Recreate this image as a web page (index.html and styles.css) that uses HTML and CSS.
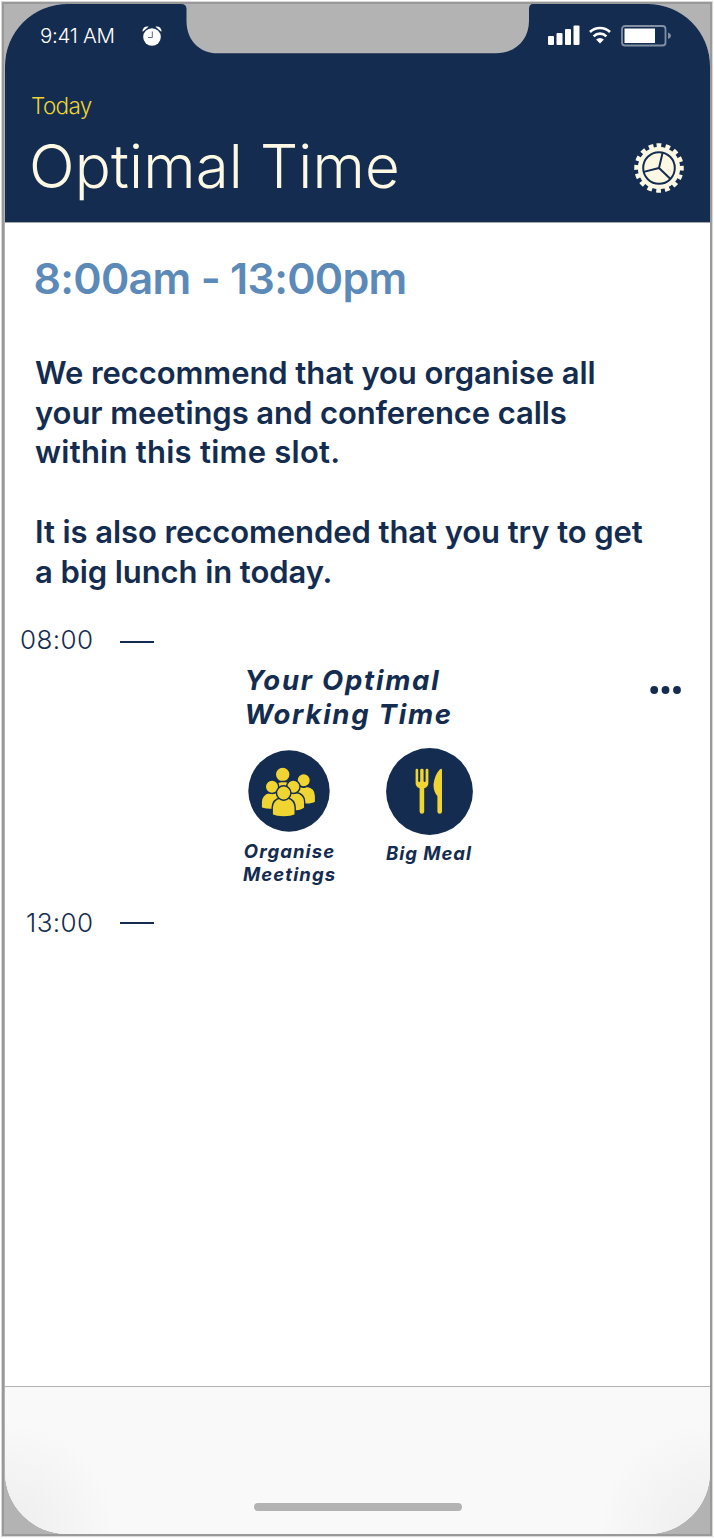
FILE: index.html
```
<!DOCTYPE html>
<html lang="en">
<head>
<meta charset="utf-8">
<title>Optimal Time</title>
<link rel="stylesheet" href="styles.css">
</head>
<body>
<div class="frame">
<main class="screen">
  <header class="header">
    <div class="status">
      <span class="clock">9:41 AM</span>
      <svg class="alarm" width="20" height="20" viewBox="0 0 20 20"><g fill="#fff"><circle cx="10" cy="11" r="8.800"/><path d="M.7 5.800C-.2 3 2.800-.3 6.600.8Z"/><path d="M19.300 5.800C20.200 3 17.200-.3 13.400.8Z"/></g><path d="M10.300 5.500v6H6" fill="none" stroke="#526888"/></svg>
      <svg class="notch" width="352" height="50" viewBox="0 0 352 50"><path fill="#b3b3b3" d="M0 0H352Q348 0 348 5V17C348 36 334 49.300 315 49.300H37C18 49.300 5.500 36 5.500 17V5Q5.500 0 0 0Z"/></svg>
      <svg class="signals" width="124" height="24" viewBox="0 0 124 24"><g fill="#fff"><rect x="0" y="12" width="6" height="9" rx="1"/><rect x="8.500" y="9" width="6" height="12" rx="1"/><rect x="17" y="5" width="6" height="16" rx="1"/><rect x="25.500" y="1.500" width="6" height="19.500" rx="1"/><path d="m52 19.500-3.900-4a5.500 5.500 0 0 1 7.800 0Z"/><rect x="76.500" y="4.500" width="30.500" height="14.500"/></g><path d="M45.600 12.300a9 9 0 0 1 12.800 0M42 8a14.500 14.500 0 0 1 20 0" fill="none" stroke="#fff" stroke-width="2.600"/><rect x="74" y="2" width="43.500" height="19.500" rx="3" fill="none" stroke="#8390a4" stroke-width="1.800"/><path d="M120 8.500q3 1 3 3.300t-3 3.300Z" fill="#8390a4"/></svg>
    </div>
    <p class="today">Today</p>
    <div class="title-row">
      <h1 class="title">Optimal Time</h1>
      <svg class="gear" width="50" height="50" viewBox="-25 -25 50 50"><circle r="21.200" fill="#fdf8e3"/><circle r="22.500" fill="none" stroke="#fdf8e3" stroke-width="4.600" stroke-dasharray="4.700 4.136" transform="rotate(-96)"/><g fill="none" stroke="#132c4f" stroke-width="2"><circle r="15.800"/><path d="M0 0 3.600-15.200M0 0-15.200 3.900M0 0 11.500 11"/></g></svg>
    </div>
  </header>

  <section class="advice">
    <h2 class="slot">8:00am - 13:00pm</h2>
    <p class="copy">We reccommend that you organise all<br>your meetings and conference calls<br><span class="loose">within this time slot.</span></p>
    <p class="copy">It is also reccomended that you try to get<br>a big lunch in today.</p>
  </section>

  <section class="timeline">
    <div class="hours">
      <div class="hour"><span class="time">08:00</span><i class="tick"></i></div>
      <div class="hour"><span class="time">13:00</span><i class="tick tick-end"></i></div>
    </div>
    <div class="card">
      <div class="card-head">
        <h3 class="heading">Your Optimal<br>Working Time</h3>
        <svg class="more" width="32" height="8" viewBox="0 0 32 8" fill="#132c4f"><circle cx="4.200" cy="4" r="3.900"/><circle cx="15.500" cy="4" r="3.900"/><circle cx="27" cy="4" r="3.900"/></svg>
      </div>
      <div class="activities">
        <div class="activity meetings">
          <svg width="82" height="82" viewBox="0 0 82 82"><circle cx="41" cy="41" r="40.700" fill="#132c4f"/>
            <g fill="#efd432" stroke="#132c4f" stroke-width="1.400">
              <circle cx="34.700" cy="24.500" r="7.400"/><path d="M25 45v-5q1-8 8-8.500h5q6 1 7 8v6Z"/>
              <path d="M43 54.300V46q.5-9 9-9.800 3.500 2 7 0 8.500 1 8.600 9.800v6q-3 2.300-9 2.300Z"/><circle cx="55.700" cy="30.300" r="6.700"/>
              <path d="M13.200 58V52q.5-8 8-9.500 3 2 6 0 7 1 8 9v8q-17 1-22-1.500Z"/><circle cx="24" cy="36.700" r="6.700"/>
              <path d="M35 60v-9q1-7.500 7.500-8.500 3 2 6 0 8 1.500 8.200 9.500v6q-4 3.300-12 3Z"/><circle cx="45.300" cy="36.700" r="6.700"/>
              <path d="M24.200 65V57.500q.5-8 8-9.500 3.500 2.500 7.500 0 7 1.500 7.500 9.500V65q-4 2-11.500 2t-11.500-2Z"/><circle cx="35.700" cy="43" r="7.200"/>
            </g></svg>
          <p class="label">Organise<br>Meetings</p>
        </div>
        <div class="activity meal">
          <svg width="87" height="87" viewBox="0 0 87 87"><circle cx="43.500" cy="43.500" r="43.400" fill="#132c4f"/>
            <g fill="#efd432"><path d="M29.600 22q0-1.200 1.300-1.200t1.300 1.200V33q0 1 1 1t1-1V22q0-1.200 1.700-1.200t1.700 1.200V33q0 1 1 1t1-1V22q0-1.200 1.400-1.200t1.400 1.200V35q0 4-4.200 5.200V63.500q0 2.200-2.300 2.200t-2.300-2.200V40.200q-4-1.200-4-5.200Z"/><path d="M56 21.800V63.500q0 2.200-2.300 2.200t-2.300-2.200V48q-3.900-4-3.900-11.500 1-9 6-14.700 2.500-2 2.500 0Z"/></g></svg>
          <p class="label">Big Meal</p>
        </div>
      </div>
    </div>
  </section>

  <footer class="toolbar"><div class="home-bar"></div></footer>
</main>
</div>
</body>
</html>
```
FILE: styles.css
```
* { box-sizing: border-box; }
body { margin: 0; padding: 2px; background: #fff; font-family: Inter, sans-serif; color: #132c4f; }
h1, h2, h3, p { margin: 0; }
svg { display: block; flex: none; }

.frame { width: 710px; height: 1534px; padding: 0 0 0 1px; background: #b3b3b3; border: 2px solid #999; outline: 1px solid #d8d9d7; }
.screen { display: flex; flex-direction: column; height: 1530px; background: #fff; border-radius: 62px; overflow: hidden; }

.header { height: 219px; background: #132c4f; border-bottom: 1px solid #a3a6a8; }
.status { display: flex; align-items: flex-start; height: 89px; padding-left: 35px; }
.clock { width: 102px; padding-top: 20px; font-size: 20.5px; font-weight: 300; line-height: 24px; letter-spacing: -0.3px; color: #fff; }
.alarm { margin-top: 22px; }
.notch { margin-left: 19px; }
.signals { margin: 20px 0 0 15px; }
.today { margin-bottom: 13px; padding-left: 26px; font-size: 22.5px; font-weight: 300; line-height: 26px; letter-spacing: -0.65px; color: #efd432; }
.title-row { display: flex; justify-content: space-between; padding: 0 26px 0 24px; }
.title { font-size: 60px; font-weight: 300; line-height: 69px; letter-spacing: 0.15px; color: #fdf8e3; }
.gear { margin-top: 11px; }

.advice { height: 400px; padding: 30px 0 0 30px; white-space: nowrap; }
.slot { margin: 0 0 50px -1.5px; font-size: 43px; font-weight: 600; line-height: 50px; letter-spacing: -0.72px; color: #5b8ab8; }
.copy { font-size: 31px; font-weight: 600; line-height: 39.7px; letter-spacing: -0.08px; }
.copy + .copy { margin-top: 39.7px; }
.loose { letter-spacing: 0.25px; }

.timeline { display: flex; flex: 1; }
.hours { width: 236px; }
.hour { display: flex; height: 283px; }
.time { width: 88.5px; padding-top: 1px; text-align: right; font-size: 26px; font-weight: 300; line-height: 32px; letter-spacing: 0.4px; }
.tick { width: 34px; height: 2px; margin: 18px 0 0 26.5px; background: #132c4f; }
.tick-end { margin-top: 16px; }

.card { flex: 1; padding-top: 40px; }
.card-head { display: flex; justify-content: space-between; padding: 0 28px 0 3.5px; }
.heading { font-size: 27.5px; font-weight: 700; font-style: italic; line-height: 34px; letter-spacing: 1.75px; }
.more { margin-top: 23px; }
.activities { display: flex; gap: 45px; padding-top: 17px; }
.activity { display: flex; flex-direction: column; align-items: center; width: 95px; }
.meal { width: 96px; }
.meetings { padding-top: 2px; }
.label { padding-left: 2px; text-align: center; font-size: 18.5px; font-weight: 700; font-style: italic; line-height: 22.5px; letter-spacing: 1.1px; white-space: nowrap; }
.meetings .label { margin-top: 8px; }
.meal .label { margin-top: 7px; padding-left: 0; letter-spacing: 0.95px; }

.toolbar { display: flex; justify-content: center; align-items: flex-end; height: 148px; padding-bottom: 23px; border-top: 1px solid #b3b3b3;
  background: radial-gradient(circle at 0 100%, #efefef 20px, #f9f9f900 112px), radial-gradient(circle at 100% 100%, #efefef 20px, #f9f9f900 112px), #f9f9f9; }
.home-bar { width: 208px; height: 8px; margin-left: 1px; border-radius: 4px; background: #b3b3b3; }
```
